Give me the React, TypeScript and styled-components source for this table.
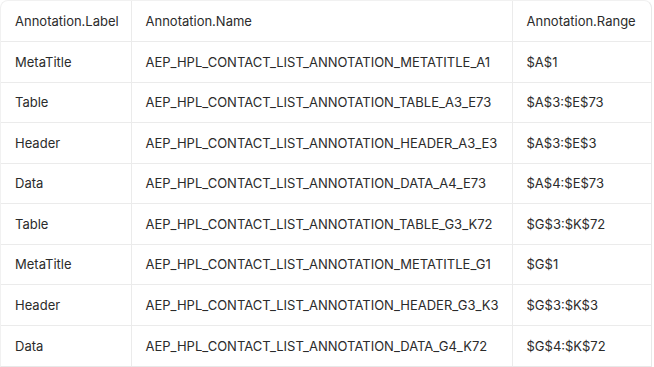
import React from "react";
import styled, { createGlobalStyle } from "styled-components";

const GlobalStyle = createGlobalStyle`
  html, body {
    margin: 0;
    padding: 0;
    background: #ffffff;
  }
  body {
    font-family: Inter, "Noto Sans", sans-serif;
  }
`;

const Card = styled.div`
  width: 652px;
  border: 1px solid #f1f1f1;
  border-right-color: #e8e8e8;
  border-bottom-color: #e8e8e8;
  border-radius: 8px 8px 0 0;
  overflow: hidden;
  box-sizing: border-box;
  background: #fff;
`;

const Table = styled.table`
  width: 100%;
  border-collapse: collapse;
  table-layout: fixed;
`;

const Col = styled.col<{ $width?: number }>`
  width: ${(p) => (p.$width ? `${p.$width}px` : "auto")};
`;

const Row = styled.tr`
  height: 40.5px;
  & + & {
    border-top: 1px solid #ebebeb;
  }
`;

const Cell = styled.td`
  box-sizing: border-box;
  padding: 0 0 0 14px;
  font-size: 13px;
  font-weight: 400;
  color: #2b2b2b;
  white-space: nowrap;
  text-align: left;
  vertical-align: middle;
  & + & {
    border-left: 1px solid #ebebeb;
  }
`;

const rows = [
  ["MetaTitle", "AEP_HPL_CONTACT_LIST_ANNOTATION_METATITLE_A1", "$A$1"],
  ["Table", "AEP_HPL_CONTACT_LIST_ANNOTATION_TABLE_A3_E73", "$A$3:$E$73"],
  ["Header", "AEP_HPL_CONTACT_LIST_ANNOTATION_HEADER_A3_E3", "$A$3:$E$3"],
  ["Data", "AEP_HPL_CONTACT_LIST_ANNOTATION_DATA_A4_E73", "$A$4:$E$73"],
  ["Table", "AEP_HPL_CONTACT_LIST_ANNOTATION_TABLE_G3_K72", "$G$3:$K$72"],
  ["MetaTitle", "AEP_HPL_CONTACT_LIST_ANNOTATION_METATITLE_G1", "$G$1"],
  ["Header", "AEP_HPL_CONTACT_LIST_ANNOTATION_HEADER_G3_K3", "$G$3:$K$3"],
  ["Data", "AEP_HPL_CONTACT_LIST_ANNOTATION_DATA_G4_K72", "$G$4:$K$72"],
];

export default function App() {
  return (
    <>
      <GlobalStyle />
      <Card>
        <Table>
          <colgroup>
            <Col $width={130} />
            <Col $width={381} />
            <Col />
          </colgroup>
          <tbody>
            <Row>
              <Cell as="th">Annotation.Label</Cell>
              <Cell as="th">Annotation.Name</Cell>
              <Cell as="th">Annotation.Range</Cell>
            </Row>
            {rows.map(([label, name, range], i) => (
              <Row key={i}>
                <Cell>{label}</Cell>
                <Cell>{name}</Cell>
                <Cell>{range}</Cell>
              </Row>
            ))}
          </tbody>
        </Table>
      </Card>
    </>
  );
}
